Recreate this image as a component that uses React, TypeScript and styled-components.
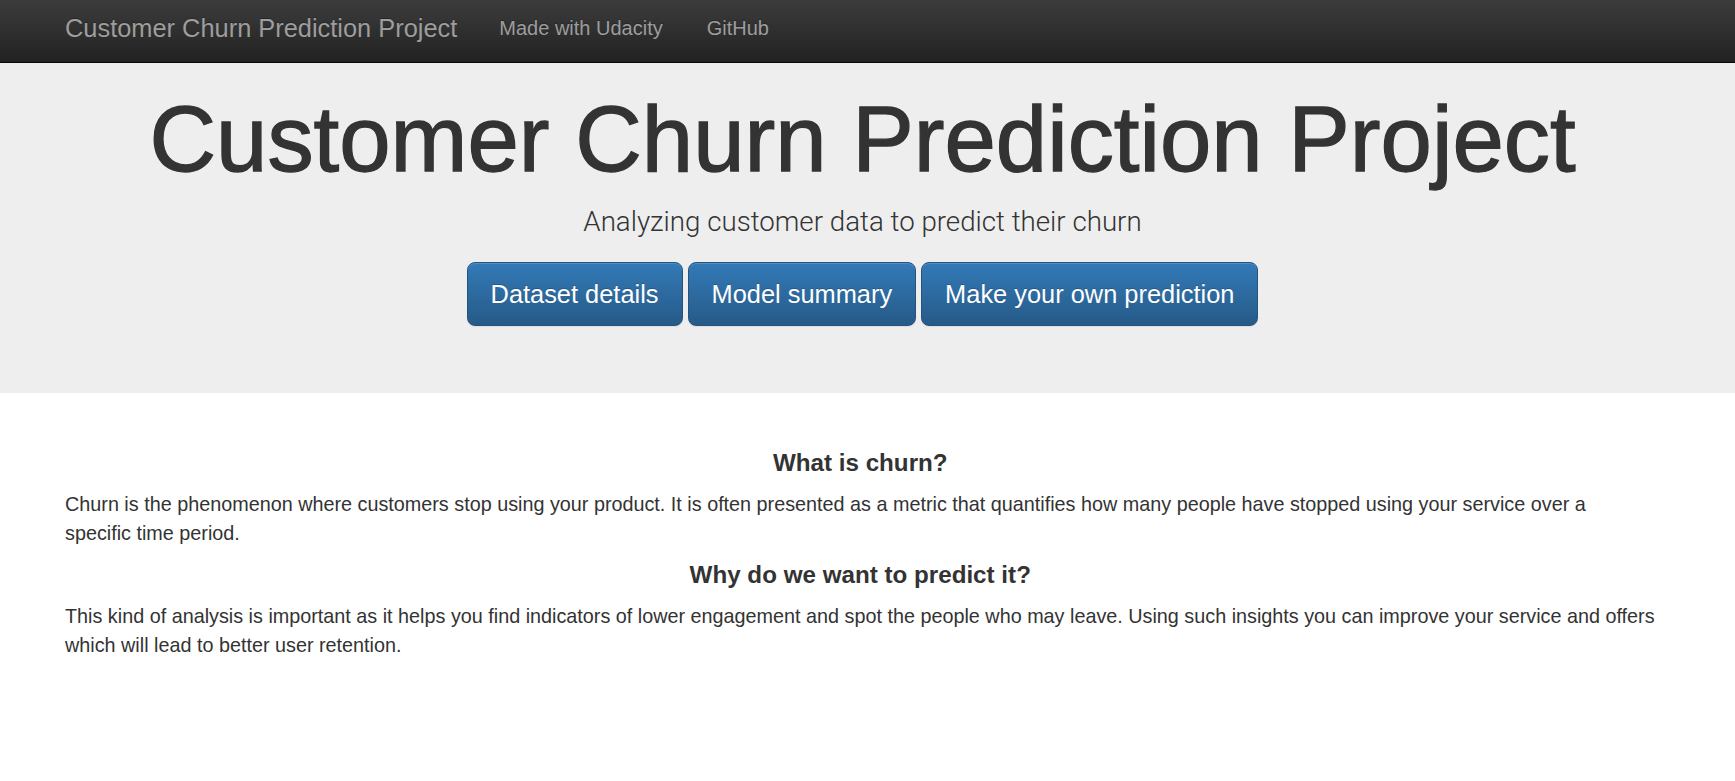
import React from "react";
import styled, { createGlobalStyle } from "styled-components";

const GlobalStyle = createGlobalStyle`
  html, body {
    margin: 0;
    padding: 0;
    background: #ffffff;
  }
  body {
    font-family: "Liberation Sans", Arial, sans-serif;
    color: #333333;
    font-size: 20px;
    line-height: 1.42857;
  }
  * { box-sizing: border-box; }
`;

const Navbar = styled.nav`
  height: 63px;
  background-image: linear-gradient(to bottom, #3c3c3c 0%, #222222 100%);
  border-bottom: 1px solid #080808;
`;

const NavInner = styled.div`
  display: flex;
  align-items: flex-start;
  padding: 14px 65px 0 65px;
`;

const Brand = styled.a`
  font-size: 25.4px;
  line-height: 28px;
  color: #9d9d9d;
  text-decoration: none;
  text-shadow: 0 -1px 0 rgba(0, 0, 0, 0.25);
  margin-right: 20px;
  white-space: nowrap;
`;

const NavLinks = styled.ul`
  display: flex;
  list-style: none;
  margin: 0;
  padding: 0;
`;

const NavLink = styled.a`
  display: block;
  font-size: 20px;
  line-height: 28px;
  padding: 0 22px;
  color: #9d9d9d;
  text-decoration: none;
  text-shadow: 0 -1px 0 rgba(0, 0, 0, 0.25);
  white-space: nowrap;
`;

const Jumbotron = styled.header`
  background: #eeeeee;
  display: flex;
  flex-direction: column;
  align-items: center;
  padding: 26px 75px 67px 65px;
`;

const Title = styled.h1`
  margin: 0;
  font-size: 92.3px;
  line-height: 101px;
  font-weight: 400;
  color: #333333;
  -webkit-text-stroke: 1.3px #333333;
  white-space: nowrap;
`;

const Lead = styled.p`
  margin: 10px 0 0 0;
  font-family: Roboto, "Liberation Sans", sans-serif;
  font-weight: 300;
  font-size: 27.7px;
  line-height: 43px;
  color: #333333;
`;

const ButtonRow = styled.div`
  display: flex;
  gap: 5px;
  margin-top: 19px;
`;

const PrimaryButton = styled.a`
  display: inline-block;
  padding: 14px 23px;
  font-size: 25.4px;
  line-height: 34px;
  color: #ffffff;
  text-decoration: none;
  text-shadow: 0 -1px 0 rgba(0, 0, 0, 0.2);
  background-image: linear-gradient(to bottom, #337ab7 0%, #265a88 100%);
  border: 1px solid #245580;
  border-radius: 8px;
  box-shadow: inset 0 1px 0 rgba(255, 255, 255, 0.15), 0 1px 1px rgba(0, 0, 0, 0.075);
  white-space: nowrap;
`;

const Main = styled.main`
  display: flex;
  flex-direction: column;
  padding: 57px 79.5px 40px 65px;
`;

const SectionTitle = styled.h4`
  margin: 0 0 14px 0;
  font-size: 24.2px;
  line-height: 26.4px;
  font-weight: 700;
  text-align: center;
  color: #333333;
`;

const Paragraph = styled.p`
  margin: 0 0 14px 0;
  font-size: 19.8px;
  line-height: 28.57px;
  color: #333333;
`;

export default function App() {
  return (
    <>
      <GlobalStyle />
      <Navbar>
        <NavInner>
          <Brand href="#">Customer Churn Prediction Project</Brand>
          <NavLinks>
            <li>
              <NavLink href="#">Made with Udacity</NavLink>
            </li>
            <li>
              <NavLink href="#">GitHub</NavLink>
            </li>
          </NavLinks>
        </NavInner>
      </Navbar>
      <Jumbotron>
        <Title>Customer Churn Prediction Project</Title>
        <Lead>Analyzing customer data to predict their churn</Lead>
        <ButtonRow>
          <PrimaryButton href="#">Dataset details</PrimaryButton>
          <PrimaryButton href="#">Model summary</PrimaryButton>
          <PrimaryButton href="#">Make your own prediction</PrimaryButton>
        </ButtonRow>
      </Jumbotron>
      <Main>
        <SectionTitle>What is churn?</SectionTitle>
        <Paragraph>
          Churn is the phenomenon where customers stop using your product. It is often presented as a metric that
          quantifies how many people have stopped using your service over a specific time period.
        </Paragraph>
        <SectionTitle>Why do we want to predict it?</SectionTitle>
        <Paragraph>
          This kind of analysis is important as it helps you find indicators of lower engagement and spot the people
          who may leave. Using such insights you can improve your service and offers which will lead to better user
          retention.
        </Paragraph>
      </Main>
    </>
  );
}
